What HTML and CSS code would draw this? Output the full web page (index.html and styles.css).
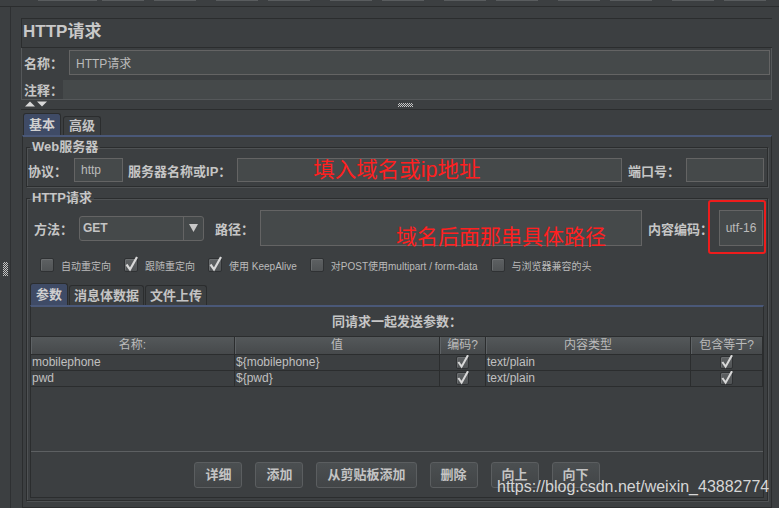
FILE: index.html
```html
<!DOCTYPE html>
<html lang="zh-CN">
<head>
<meta charset="utf-8">
<title>HTTP请求</title>
<link rel="stylesheet" href="styles.css">
</head>
<body>
<div class="topedge"></div>
<div class="frame">
  <div class="splitter"><div class="grip-v"></div></div>
  <div class="content">
    <div class="titlebox">HTTP请求</div>
    <div class="namepanel">
      <div class="namerow"><span class="lbl lbl-name">名称：</span><div class="field field-name">HTTP请求</div></div>
      <div class="commentrow"><span class="lbl lbl-comment">注释：</span><div class="field-comment"></div></div>
    </div>
    <div class="arrowrow">
      <svg class="arrows" width="23" height="6" viewBox="0 0 23 6"><polygon points="0,5.5 5,0.5 10,5.5"/><polygon points="12,0.5 22,0.5 17,5.5"/></svg>
      <div class="grip-h"></div>
    </div>
    <div class="tabs">
      <div class="tab sel">基本</div><div class="tab">高级</div>
    </div>
    <div class="tabbody">
      <fieldset class="group web">
        <legend>Web服务器</legend>
        <div class="row web-row">
          <span class="lbl">协议：</span>
          <div class="field f-proto">http</div>
          <span class="lbl l-server">服务器名称或IP：</span>
          <div class="field f-server"><span class="note note-lg">填入域名或ip地址</span></div>
          <span class="lbl l-port">端口号：</span>
          <div class="field f-port"></div>
        </div>
      </fieldset>
      <fieldset class="group req">
        <legend>HTTP请求</legend>
        <div class="row req-row">
          <span class="lbl">方法：</span>
          <div class="combo"><span class="combo-val">GET</span><span class="combo-btn"><svg width="9" height="8" viewBox="0 0 9 8"><polygon points="0,0 9,0 4.5,8"/></svg></span></div>
          <span class="lbl l-path">路径：</span>
          <div class="field f-path"><span class="note note-md">域名后面那串具体路径</span></div>
          <span class="lbl l-enc">内容编码：</span>
          <div class="redbox"><div class="field f-enc">utf-16</div></div>
        </div>
        <div class="checks">
          <span class="chk"><span class="box"></span>自动重定向</span>
          <span class="chk"><span class="box"><svg width="12" height="12" viewBox="0 0 12 12"><path d="M1.5 5.5 L5 10.5 L12 -2"/></svg></span>跟随重定向</span>
          <span class="chk"><span class="box"><svg width="12" height="12" viewBox="0 0 12 12"><path d="M1.5 5.5 L5 10.5 L12 -2"/></svg></span>使用 KeepAlive</span>
          <span class="chk"><span class="box"></span>对POST使用multipart / form-data</span>
          <span class="chk"><span class="box"></span>与浏览器兼容的头</span>
        </div>
        <div class="params">
          <div class="tabs tabs-sm">
            <div class="tab sel">参数</div><div class="tab">消息体数据</div><div class="tab">文件上传</div>
          </div>
          <div class="ppanel">
            <div class="ptitle">同请求一起发送参数：</div>
            <div class="ptable">
              <div class="trow thead"><div>名称:</div><div>值</div><div>编码?</div><div>内容类型</div><div>包含等于?</div></div>
              <div class="trow"><div>mobilephone</div><div>${mobilephone}</div><div class="c"><span class="box sm"><svg width="11" height="11" viewBox="0 0 12 12"><path d="M1.5 5.5 L5 10.5 L12 -2"/></svg></span></div><div>text/plain</div><div class="c"><span class="box sm"><svg width="11" height="11" viewBox="0 0 12 12"><path d="M1.5 5.5 L5 10.5 L12 -2"/></svg></span></div></div>
              <div class="trow"><div>pwd</div><div>${pwd}</div><div class="c"><span class="box sm"><svg width="11" height="11" viewBox="0 0 12 12"><path d="M1.5 5.5 L5 10.5 L12 -2"/></svg></span></div><div>text/plain</div><div class="c"><span class="box sm"><svg width="11" height="11" viewBox="0 0 12 12"><path d="M1.5 5.5 L5 10.5 L12 -2"/></svg></span></div></div>
            </div>
            <div class="btns">
              <span class="btn">详细</span>
              <span class="btn">添加</span>
              <span class="btn">从剪贴板添加</span>
              <span class="btn">删除</span>
              <span class="btn">向上</span>
              <span class="btn">向下</span>
            </div>
          </div>
        </div>
      </fieldset>
    </div>
  </div>
</div>
<div class="watermark">https://blog.csdn.net/weixin_43882774</div>
</body>
</html>
```
FILE: styles.css
```css
* { box-sizing: border-box; }
html, body { margin: 0; padding: 0; }
body {
  width: 779px; height: 508px; overflow: hidden; position: relative;
  background: #3c3f41; color: #bbbbbb;
  font-family: "Liberation Sans", "Noto Sans CJK SC", sans-serif;
  font-size: 12px;
}
.topedge {
  height: 7px;
  border-bottom: 1px solid #2b2d2e;
  background-image:
    linear-gradient(#595c5e, #595c5e),
    repeating-linear-gradient(90deg, #595c5e 0 42px, transparent 42px 52px, #595c5e 52px 94px, transparent 94px 114px);
  background-size: 59px 1px, 700px 1px;
  background-position: 38px 0, 102px 0;
  background-repeat: no-repeat;
}
.frame { display: flex; height: 501px; }
.splitter { width: 11px; flex: none; border-right: 1px solid #2e3032; }
.grip-v {
  width: 5px; height: 14px; margin: 255px 0 0 3px;
  background-image: conic-gradient(#c4c4c4 25%, transparent 0 50%, #c4c4c4 0 75%, transparent 0);
  background-size: 2px 2px;
}
.content { flex: 1; min-width: 0; padding: 11px 7px 0 10px; display: flex; flex-direction: column; }
.titlebox {
  height: 30px; flex: none;
  border: 1px solid #2b2d2e; border-right: 0;
  padding-left: 1px;
  font-size: 17px; font-weight: bold; line-height: 25px; color: #c8c8c8;
}
.namepanel { height: 52px; flex: none; border: 1px solid #55585a; border-top: 0; padding: 2px 0 0 2px; }
.lbl { font-size: 13px; font-weight: bold; color: #c6c6c6; white-space: nowrap; flex: none; }
.namerow { display: flex; align-items: center; height: 25px; }
.lbl-name { width: 45px; }
.field {
  background: #45494a; border: 1px solid #646464; color: #bbbbbb;
  font-size: 12px; display: flex; align-items: center; padding-left: 6px;
  white-space: nowrap; overflow: hidden;
}
.field-name { flex: 1; height: 25px; margin-right: 1px; }
.commentrow { display: flex; align-items: center; height: 19px; margin-top: 5px; }
.lbl-comment { width: 39px; }
.field-comment { flex: 1; height: 19px; background: #45494a; }
.arrowrow { height: 10px; flex: none; border-bottom: 1px solid #2b2d2e; display: flex; align-items: flex-start; }
.arrows { margin: 1px 0 0 4px; fill: #d8d8d8; display: block; }
.grip-h {
  width: 15px; height: 4px; margin: 3px 0 0 350px;
  background-image: conic-gradient(#c4c4c4 25%, transparent 0 50%, #c4c4c4 0 75%, transparent 0);
  background-size: 2px 2px;
}
.tabs { display: flex; align-items: flex-end; height: 25px; flex: none; padding-left: 2px; gap: 2px; }
.tab {
  border: 1px solid #2b2d2e; border-bottom: 0; border-radius: 3px 3px 0 0;
  font-size: 13px; font-weight: bold; color: #c4c4c4;
  padding: 0 5px; height: 19px; line-height: 18px; white-space: nowrap;
}
.tab.sel { height: 22px; line-height: 21px; background: #3f4b66; color: #d0d0d0; }
.tabbody {
  flex: 1; min-height: 0; margin-left: 1px;
  border: 1px solid #2b2d2e; border-top: 2px solid #4a5878;
  padding: 3px 3px 3px 3px;
}
fieldset.group {
  margin: 0; padding: 4px 3px 4px 1px; min-width: 0;
  border: 1px solid #2b2d2e;
  box-shadow: inset 1px 1px 0 #4f5254, 1px 1px 0 #4f5254;
}
fieldset.req { margin-top: 4px; padding: 5px 3px 0 1px; }
legend { padding: 0 2px; margin-left: 2px; font-size: 13px; font-weight: bold; line-height: 14px; color: #c6c6c6; }
.row { display: flex; align-items: center; }
.web-row { height: 24px; }
.web-row .field { height: 24px; }
.f-proto { width: 49px; margin-left: 7px; flex: none; }
.l-server { margin: 0 6px 0 5px; }
.f-server { flex: 1; min-width: 0; padding-left: 75px; }
.l-port { margin: 0 6px; }
.f-port { width: 78px; flex: none; }
.note { color: #ff2020; font-family: "Liberation Sans", "Noto Sans CJK SC", sans-serif; font-weight: normal; }
.note-lg { font-size: 21.5px; line-height: 22px; }
.note-md { font-size: 21px; line-height: 22px; margin-bottom: -3px; }
.req-row { height: 36px; padding-left: 6px; }
.combo {
  width: 125px; height: 25px; margin-left: 6px; flex: none; display: flex;
  background: #45494a; border: 1px solid #646464; border-radius: 3px;
}
.combo-val { flex: 1; padding-left: 3px; font-weight: bold; line-height: 23px; color: #c4c4c4; }
.combo-btn { width: 20px; border-left: 1px solid #646464; display: flex; align-items: center; justify-content: center; fill: #c8c8c8; }
.l-path { margin: 0 6px 0 11px; }
.f-path { flex: 1; min-width: 0; height: 36px; align-items: flex-end; padding-left: 135px; overflow: visible; }
.l-enc { margin: 0 -5px 0 6px; }
.redbox {
  flex: none; border: 2px solid #ee1c1c; border-radius: 3px;
  padding: 8px 1px 6px 9px; margin: -10px -2px -8px 0;
}
.f-enc { width: 44px; height: 36px; justify-content: center; padding: 0; }
.checks { display: flex; align-items: center; height: 14px; margin-top: 12px; padding-left: 12px; font-size: 10px; color: #bbbbbb; }
.chk { display: flex; align-items: center; margin-right: 13px; white-space: nowrap; }
.chk .box { margin-right: 7px; }
.box {
  width: 14px; height: 14px; flex: none; display: block;
  border: 1px solid #2f3133; border-radius: 2px;
  background: linear-gradient(#5e6163, #505355);
  box-shadow: inset 1px 1px 0 #6a6d6f;
}
.box svg { display: block; overflow: visible; }
.box path { fill: none; stroke: #d8d8d8; stroke-width: 2.2; }
.box.sm { width: 13px; height: 13px; }
.params { margin: 11px 0 2px 2px; }
.tabs-sm { height: 22px; padding-left: 0; gap: 1px; }
.tabs-sm .tab { height: 20px; line-height: 19px; padding: 0 4px; }
.tabs-sm .tab.sel { height: 22px; line-height: 21px; padding: 0 5px; }
.ppanel { border: 1px solid #2b2d2e; border-top: 2px solid #4a5878; }
.ptitle { height: 29px; line-height: 29px; text-align: center; font-size: 13px; font-weight: bold; color: #c6c6c6; }
.ptable { height: 116px; border-bottom: 1px solid #5d6062; }
.trow {
  display: grid; grid-template-columns: 204px 205px 46px 205px 1fr;
  height: 16px; border-bottom: 1px solid #2b2d2e;
}
.trow > div { border-right: 1px solid #2b2d2e; padding-left: 1px; line-height: 15px; white-space: nowrap; overflow: hidden; color: #c0c0c0; }
.thead { height: 19px; border-top: 1px solid #2b2d2e; background: linear-gradient(#54585a, #46494b); }
.thead > div { text-align: center; padding: 0; line-height: 17px; box-shadow: inset 1px 0 0 #5e6265; color: #bbbbbb; }
.trow .c { display: flex; justify-content: center; align-items: center; padding: 0; }
.btns { height: 45px; display: flex; justify-content: center; align-items: flex-start; gap: 13px; padding-top: 10px; }
.btn {
  height: 26px; padding: 0 10px; border: 1px solid #5b5e60; border-radius: 3px;
  background: linear-gradient(#4b4f51, #424547);
  font-size: 13px; font-weight: bold; color: #c4c4c4; line-height: 24px; white-space: nowrap;
}
.watermark { position: absolute; left: 497px; top: 477px; font-size: 16px; line-height: 20px; color: #d6d6d6; white-space: nowrap; }
```
